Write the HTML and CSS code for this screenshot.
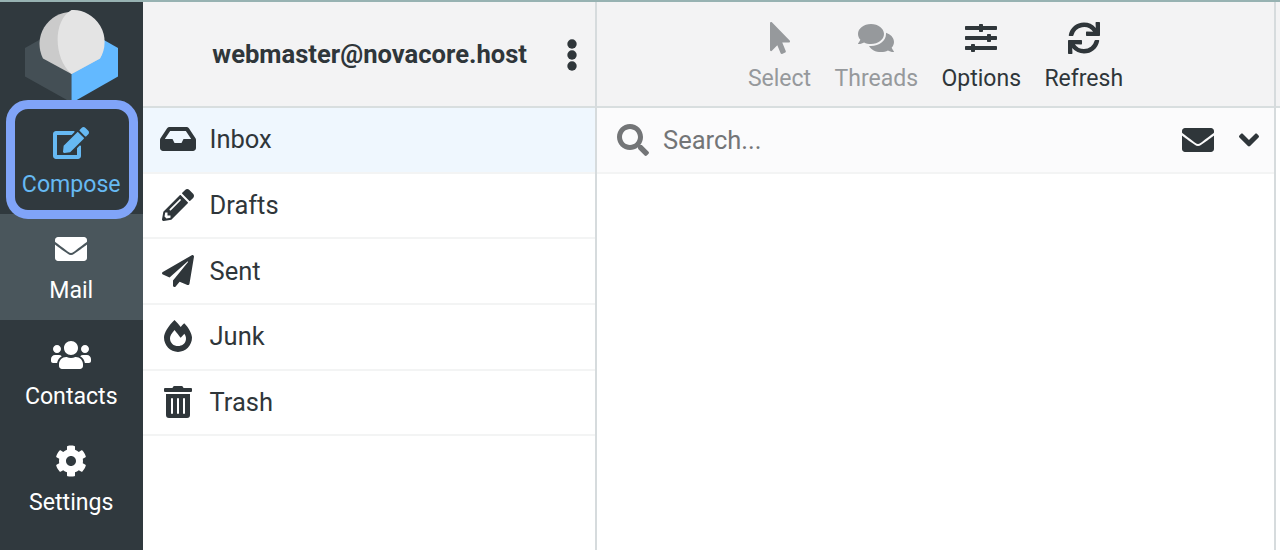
FILE: index.html
```html
<!DOCTYPE html>
<html lang="en">
<head>
<meta charset="utf-8">
<title>Webmail</title>
<link rel="stylesheet" href="styles.css">
</head>
<body>
<div class="app">
  <nav class="taskmenu">
    <svg class="logo" width="94" height="94" viewBox="24 10 94 94">
      <path fill="#444f55" d="M25 48 40 39.500 71.500 74V102.500L25 76.500z"/>
      <path fill="#63b9ff" d="M103 39.500 118 48V76.500L71.500 103V74z"/>
      <path fill="#cbcbcb" d="M43 58.500A32 32 0 1 1 100 58.500L71.500 74z"/>
      <path fill="#e4e4e4" d="M71.500 10A32 32 0 0 1 100 58.500L71.500 74C53 58 53 20 71.500 10z"/>
    </svg>
    <a class="task compose">
      <svg class="icon" viewBox="0 0 576 512"><path d="M402.600 83.200l90.200 90.200c3.800 3.800 3.800 10 0 13.800L274.400 405.600l-92.800 10.300c-12.400 1.400-22.900-9.100-21.500-21.500l10.300-92.800L388.800 83.200c3.800-3.800 10-3.800 13.800 0zm162-22.900l-48.800-48.800c-15.200-15.200-39.900-15.200-55.200 0l-35.400 35.400c-3.800 3.800-3.800 10 0 13.800l90.200 90.200c3.800 3.800 10 3.800 13.800 0l35.400-35.400c15.200-15.300 15.200-40 0-55.200zM384 346.200V448H64V128h229.800c3.200 0 6.200-1.300 8.500-3.500l40-40c7.600-7.600 2.200-20.500-8.500-20.500H48C21.500 64 0 85.500 0 112v352c0 26.500 21.500 48 48 48h352c26.500 0 48-21.500 48-48V306.200c0-10.700-12.900-16-20.500-8.500l-40 40c-2.200 2.300-3.500 5.300-3.500 8.500z"/></svg>
      <span>Compose</span>
    </a>
    <a class="task selected">
      <svg class="icon" viewBox="0 0 512 512"><path d="M502.300 190.800c3.900-3.100 9.700-.2 9.700 4.700V400c0 26.500-21.500 48-48 48H48c-26.500 0-48-21.500-48-48V195.600c0-5 5.700-7.800 9.700-4.700 22.400 17.400 52.100 39.500 154.100 113.600 21.100 15.400 56.700 47.800 92.200 47.600 35.700.3 72-32.800 92.300-47.600 102-74.100 131.600-96.300 154-113.700zM256 320c23.200.4 56.600-29.200 73.400-41.400 132.700-96.300 142.800-104.700 173.400-128.700 5.800-4.500 9.200-11.500 9.200-18.900v-19c0-26.500-21.500-48-48-48H48c-26.500 0-48 21.500-48 48v19c0 7.400 3.400 14.300 9.200 18.900 30.600 23.900 40.700 32.400 173.400 128.700 16.800 12.200 50.200 41.800 73.400 41.400z"/></svg>
      <span>Mail</span>
    </a>
    <a class="task">
      <svg class="icon" viewBox="0 0 640 512"><path d="M96 224c35.300 0 64-28.700 64-64s-28.700-64-64-64-64 28.700-64 64 28.700 64 64 64zm448 0c35.300 0 64-28.700 64-64s-28.700-64-64-64-64 28.700-64 64 28.700 64 64 64zm32 32h-64c-17.600 0-33.500 7.100-45.100 18.600 40.300 22.100 68.900 62 75.100 109.400h66c17.700 0 32-14.300 32-32v-32c0-35.300-28.700-64-64-64zm-256 0c61.900 0 112-50.100 112-112S381.900 32 320 32 208 82.100 208 144s50.100 112 112 112zm76.800 32h-8.300c-20.800 10-43.900 16-68.500 16s-47.600-6-68.500-16h-8.300C179.600 288 128 339.600 128 403.200V432c0 26.500 21.500 48 48 48h288c26.500 0 48-21.500 48-48v-28.800c0-63.600-51.600-115.200-115.200-115.200zm-223.700-13.400C161.500 263.100 145.600 256 128 256H64c-35.300 0-64 28.700-64 64v32c0 17.700 14.300 32 32 32h65.900c6.300-47.400 34.900-87.300 75.200-109.400z"/></svg>
      <span>Contacts</span>
    </a>
    <a class="task">
      <svg class="icon" viewBox="0 0 512 512"><path d="M487.400 315.700l-42.600-24.600c4.300-23.200 4.300-47 0-70.200l42.600-24.600c4.900-2.800 7.100-8.600 5.500-14-11.100-35.600-30-67.800-54.700-94.600-3.800-4.100-10-5.100-14.800-2.300L380.800 110c-17.900-15.400-38.500-27.300-60.800-35.100V25.800c0-5.600-3.900-10.500-9.400-11.700-36.700-8.200-74.300-7.800-109.200 0-5.500 1.200-9.400 6.100-9.400 11.700V75c-22.200 7.900-42.800 19.800-60.800 35.100L88.700 85.500c-4.900-2.800-11-1.900-14.800 2.300-24.700 26.700-43.600 58.900-54.700 94.600-1.700 5.400.6 11.200 5.500 14L67.300 221c-4.300 23.200-4.300 47 0 70.200l-42.600 24.600c-4.900 2.800-7.100 8.600-5.500 14 11.100 35.600 30 67.800 54.700 94.600 3.800 4.100 10 5.100 14.800 2.300l42.600-24.600c17.900 15.400 38.500 27.300 60.800 35.100v49.200c0 5.600 3.900 10.500 9.400 11.700 36.700 8.200 74.300 7.800 109.200 0 5.500-1.200 9.400-6.100 9.400-11.700v-49.200c22.200-7.900 42.800-19.800 60.800-35.100l42.600 24.600c4.900 2.800 11 1.900 14.800-2.300 24.700-26.700 43.600-58.900 54.700-94.600 1.500-5.500-.7-11.300-5.600-14.100zM256 336c-44.100 0-80-35.900-80-80s35.900-80 80-80 80 35.900 80 80-35.900 80-80 80z"/></svg>
      <span>Settings</span>
    </a>
  </nav>

  <section class="folders">
    <header class="bar account">
      <span class="user">webmaster@novacore.host</span>
      <svg class="dots" width="10" height="32" viewBox="0 0 10 32"><circle cx="5" cy="5" r="4.700"/><circle cx="5" cy="16" r="4.700"/><circle cx="5" cy="27" r="4.700"/></svg>
    </header>
    <ul class="list">
      <li class="folder current"><svg class="icon" viewBox="0 0 576 512"><path d="M567.938 243.908L462.250 85.374A48.003 48.003 0 0 0 422.311 64H153.689a48 48 0 0 0-39.938 21.374L8.062 243.908A47.994 47.994 0 0 0 0 270.533V400c0 26.510 21.490 48 48 48h480c26.510 0 48-21.490 48-48V270.533a47.994 47.994 0 0 0-8.062-26.625zM162.252 128h251.497l85.333 128H376l-32 64H232l-32-64H76.918l85.334-128z"/></svg><span>Inbox</span></li>
      <li class="folder"><svg class="icon" viewBox="0 0 512 512"><path d="M497.900 142.100l-46.100 46.100c-4.700 4.700-12.300 4.700-17 0l-111-111c-4.700-4.700-4.700-12.300 0-17l46.100-46.100c18.700-18.700 49.100-18.700 67.900 0l60.100 60.100c18.800 18.700 18.800 49.100 0 67.900zM284.200 99.800L21.600 362.400.4 483.900c-2.900 16.400 11.400 30.600 27.800 27.800l121.500-21.300 262.600-262.600c4.700-4.700 4.700-12.300 0-17l-111-111c-4.800-4.700-12.400-4.700-17.100 0zM124.100 339.900c-5.500-5.500-5.500-14.300 0-19.800l154-154c5.500-5.500 14.300-5.500 19.800 0s5.500 14.300 0 19.800l-154 154c-5.500 5.500-14.300 5.500-19.800 0zM88 424h48v36.300l-64.500 11.300-31.100-31.100L51.700 376H88v48z"/></svg><span>Drafts</span></li>
      <li class="folder"><svg class="icon" viewBox="0 0 512 512"><path d="M476 3.200L12.500 270.600c-18.100 10.400-15.800 35.600 2.200 43.200L121 358.400l287.300-253.200c5.500-4.900 13.300 2.600 8.600 8.300L176 407v80.500c0 23.600 28.500 32.900 42.500 15.800L282 426l124.600 52.200c14.200 6 30.400-2.900 33-18.200l72-432C515 7.800 493.300-6.800 476 3.200z"/></svg><span>Sent</span></li>
      <li class="folder"><svg class="icon" viewBox="0 0 448 512"><path d="M323.560 51.200c-20.800 19.300-39.580 39.590-56.220 59.970C240.080 73.620 206.280 35.530 168 0 69.740 91.170 0 209.960 0 281.600 0 408.850 100.290 512 224 512s224-103.150 224-230.400c0-53.270-51.980-163.140-124.440-230.400zm-19.470 340.650C282.430 407.010 255.720 416 226.860 416 154.710 416 96 368.260 96 290.750c0-38.610 24.310-72.630 72.790-130.750 6.930 7.980 98.830 125.340 98.830 125.340l58.630-66.880c4.140 6.850 7.910 13.550 11.270 19.970 27.350 52.190 15.810 118.970-33.430 153.420z"/></svg><span>Junk</span></li>
      <li class="folder"><svg class="icon" viewBox="0 0 448 512"><path d="M32 464a48 48 0 0 0 48 48h288a48 48 0 0 0 48-48V128H32zm272-256a16 16 0 0 1 32 0v224a16 16 0 0 1-32 0zm-96 0a16 16 0 0 1 32 0v224a16 16 0 0 1-32 0zm-96 0a16 16 0 0 1 32 0v224a16 16 0 0 1-32 0zM432 32H312l-9.400-18.700A24 24 0 0 0 281.100 0H166.800a23.720 23.720 0 0 0-21.400 13.300L136 32H16A16 16 0 0 0 0 48v32a16 16 0 0 0 16 16h416a16 16 0 0 0 16-16V48a16 16 0 0 0-16-16z"/></svg><span>Trash</span></li>
    </ul>
  </section>

  <section class="messages">
    <header class="bar toolbar">
      <a class="tool disabled"><svg class="icon" viewBox="0 0 320 512"><path d="M302.189 329.126H196.105l55.831 135.993c3.889 9.428-.555 19.999-9.444 23.999l-49.165 21.427c-9.165 4-19.443-.571-23.332-9.714l-53.053-129.136-86.664 89.138C18.729 472.710 0 463.554 0 447.977V18.299C0 1.899 19.921-6.096 30.277 5.443l284.412 292.542c11.472 11.179 3.007 31.141-12.500 31.141z"/></svg><span>Select</span></a>
      <a class="tool disabled"><svg class="icon" viewBox="0 0 576 512"><path d="M416 192c0-88.400-93.100-160-208-160S0 103.600 0 192c0 34.300 14.100 65.900 38 92-13.400 30.200-35.500 54.200-35.800 54.500-2.200 2.300-2.800 5.700-1.500 8.700S4.800 352 8 352c36.600 0 66.900-12.300 88.700-25 32.200 15.700 70.300 25 111.300 25 114.900 0 208-71.600 208-160zm122 220c23.900-26 38-57.700 38-92 0-66.900-53.500-124.200-129.300-148.100.9 6.600 1.300 13.300 1.300 20.100 0 105.900-107.700 192-240 192-10.800 0-21.300-.8-31.700-1.900C207.800 439.600 281.800 480 368 480c41 0 79.100-9.200 111.300-25 21.800 12.700 52.100 25 88.700 25 3.200 0 6.100-1.900 7.300-4.800 1.300-2.900.7-6.300-1.500-8.700-.3-.3-22.400-24.200-35.800-54.500z"/></svg><span>Threads</span></a>
      <a class="tool"><svg class="icon" viewBox="0 0 512 512"><path d="M496 384H160v-16c0-8.800-7.200-16-16-16h-32c-8.800 0-16 7.200-16 16v16H16c-8.800 0-16 7.200-16 16v32c0 8.800 7.200 16 16 16h80v16c0 8.800 7.200 16 16 16h32c8.800 0 16-7.200 16-16v-16h336c8.800 0 16-7.200 16-16v-32c0-8.800-7.200-16-16-16zm0-160h-80v-16c0-8.800-7.200-16-16-16h-32c-8.800 0-16 7.200-16 16v16H16c-8.800 0-16 7.200-16 16v32c0 8.800 7.200 16 16 16h336v16c0 8.800 7.200 16 16 16h32c8.800 0 16-7.200 16-16v-16h80c8.800 0 16-7.200 16-16v-32c0-8.800-7.200-16-16-16zm0-160H288V48c0-8.800-7.200-16-16-16h-32c-8.800 0-16 7.200-16 16v16H16C7.200 64 0 71.200 0 80v32c0 8.800 7.200 16 16 16h208v16c0 8.800 7.200 16 16 16h32c8.800 0 16-7.200 16-16v-16h208c8.800 0 16-7.200 16-16V80c0-8.800-7.200-16-16-16z"/></svg><span>Options</span></a>
      <a class="tool"><svg class="icon" viewBox="0 0 512 512"><path d="M440.650 12.570l4 82.770A247.160 247.160 0 0 0 255.830 8C134.730 8 33.910 94.920 12.290 209.820A12 12 0 0 0 24.090 224h49.050a12 12 0 0 0 11.670-9.260 175.910 175.910 0 0 1 317-56.940l-101.460-4.860a12 12 0 0 0-12.570 12v47.410a12 12 0 0 0 12 12H500a12 12 0 0 0 12-12V12a12 12 0 0 0-12-12h-47.370a12 12 0 0 0-11.980 12.570zM255.830 432a175.610 175.610 0 0 1-146-77.800l101.800 4.870a12 12 0 0 0 12.570-12v-47.400a12 12 0 0 0-12-12H12a12 12 0 0 0-12 12V500a12 12 0 0 0 12 12h47.350a12 12 0 0 0 12-12.600l-4.150-82.570A247.170 247.170 0 0 0 255.830 504c121.110 0 221.930-86.920 243.550-201.820a12 12 0 0 0-11.800-14.180h-49.050a12 12 0 0 0-11.670 9.260A175.860 175.860 0 0 1 255.830 432z"/></svg><span>Refresh</span></a>
    </header>
    <div class="search">
      <svg class="icon magnifier" viewBox="0 0 512 512"><path d="M505 442.700L405.300 343c-4.500-4.500-10.600-7-17-7H372c27.600-35.300 44-79.700 44-128C416 93.100 322.900 0 208 0S0 93.100 0 208s93.100 208 208 208c48.300 0 92.700-16.400 128-44v16.300c0 6.400 2.500 12.500 7 17l99.700 99.700c9.400 9.400 24.600 9.400 33.900 0l28.300-28.300c9.400-9.400 9.400-24.600.1-34zM208 336c-70.700 0-128-57.200-128-128 0-70.700 57.200-128 128-128 70.700 0 128 57.200 128 128 0 70.700-57.200 128-128 128z"/></svg>
      <span class="placeholder">Search...</span>
      <svg class="icon" viewBox="0 0 512 512"><path d="M502.300 190.800c3.900-3.100 9.700-.2 9.700 4.700V400c0 26.500-21.500 48-48 48H48c-26.500 0-48-21.500-48-48V195.600c0-5 5.700-7.800 9.700-4.700 22.400 17.400 52.100 39.500 154.100 113.600 21.100 15.400 56.700 47.800 92.200 47.600 35.700.3 72-32.800 92.300-47.600 102-74.100 131.600-96.300 154-113.700zM256 320c23.200.4 56.600-29.200 73.400-41.400 132.700-96.300 142.800-104.700 173.400-128.700 5.800-4.500 9.200-11.500 9.200-18.900v-19c0-26.500-21.500-48-48-48H48c-26.500 0-48 21.500-48 48v19c0 7.400 3.400 14.300 9.200 18.900 30.600 23.900 40.700 32.400 173.400 128.700 16.800 12.200 50.200 41.800 73.400 41.400z"/></svg>
      <svg class="icon angle" viewBox="0 0 320 512"><path d="M143 352.300L7 216.300c-9.400-9.400-9.400-24.600 0-33.900l22.600-22.600c9.400-9.400 24.600-9.400 33.900 0l96.400 96.400 96.400-96.400c9.400-9.400 24.600-9.400 33.900 0l22.600 22.600c9.400 9.400 9.400 24.600 0 33.900l-136 136c-9.200 9.400-24.400 9.400-33.800 0z"/></svg>
    </div>
  </section>

  <section class="content"><header class="bar"></header></section>
</div>
</body>
</html>
```
FILE: styles.css
```css
* { box-sizing: border-box; }

body {
  margin: 0;
  font-family: Roboto, "Liberation Sans", sans-serif;
  font-size: 25.5px;
  line-height: 30px;
  color: #2f363a;
  background: #fff;
}

.app {
  display: flex;
  height: 550px;
  overflow: hidden;
  border-top: 2px solid #97b2b2;
}

.icon {
  display: block;
  height: 32px;
  fill: currentColor;
}

/* Task menu */
.taskmenu {
  flex: none;
  width: 142.5px;
  background: #30393e;
  color: #fff;
}

.logo {
  display: block;
  margin: 8px 0 4px 24px;
}

.task {
  display: flex;
  flex-direction: column;
  align-items: center;
  gap: 11px;
  height: 106px;
  padding-top: 18.8px;
  font-size: 23.1px;
}

.compose {
  position: relative;
  color: #66b9f3;
}

.compose::after {
  content: "";
  position: absolute;
  inset: -8.5px 4.5px -5px 6px;
  border: 9px solid #80a4f8;
  border-radius: 22px;
}

.selected { background: #4a565c; }

/* Shared header bars */
.bar {
  height: 106px;
  border-bottom: 2px solid #d8dedf;
  background: #f3f3f4;
}

/* Folder list */
.folders {
  flex: none;
  width: 454.5px;
  border-right: 2px solid #d6dbdd;
}

.account {
  display: flex;
  align-items: center;
  justify-content: flex-end;
  gap: 40px;
  padding: 1px 18px 0 0;
}

.user {
  padding-bottom: 1px;
  font-weight: 700;
  font-size: 25.6px;
}

.dots { fill: #2f363a; }

.list {
  margin: 0;
  padding: 0;
  list-style: none;
}

.folder {
  display: flex;
  align-items: center;
  gap: 14px;
  height: 65.7px;
  padding: 0 0 1.4px 17px;
  border-bottom: 2px solid #f3f4f4;
}

.folder .icon { width: 36px; }

.current { background: #eff7fe; }

/* Message list */
.messages {
  flex: none;
  width: 679px;
  border-right: 2px solid #d6dbdd;
}

.toolbar {
  display: flex;
  justify-content: center;
  gap: 23.4px;
  padding-top: 19.5px;
  font-size: 23px;
}

.tool {
  display: flex;
  flex-direction: column;
  align-items: center;
  gap: 10px;
}

.disabled { color: #96999c; }

.search {
  display: flex;
  align-items: center;
  height: 65.5px;
  padding: 0 15px 0 20px;
  border-bottom: 2px solid #f3f4f4;
  background: #fbfbfc;
}

.magnifier { color: #737577; }

.placeholder {
  flex: 1;
  margin-left: 14px;
  color: #737577;
}

.angle { margin-left: 25px; }

.content { flex: 1; }
```
